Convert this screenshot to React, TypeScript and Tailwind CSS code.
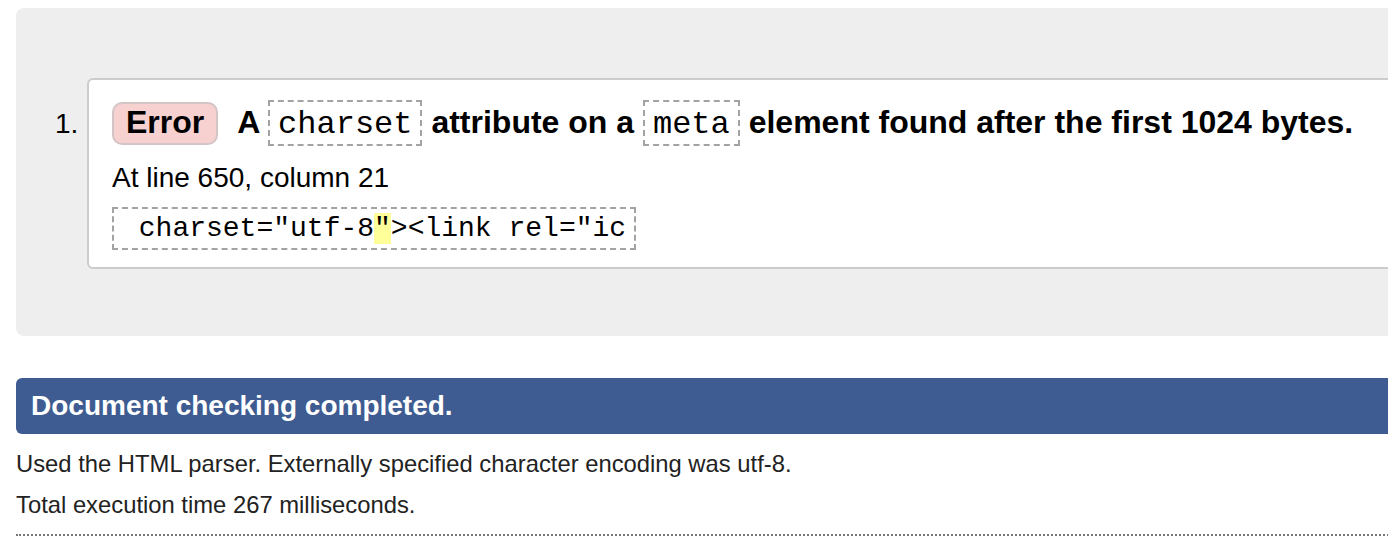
const sans = "font-['Liberation_Sans',Arial,Helvetica,sans-serif]";
const mono = "font-['Liberation_Mono','Courier_New',monospace]";

function Code({ children }: { children: React.ReactNode }) {
  return (
    <code
      className={`${mono} inline-block border-2 border-dashed border-[#a3a3a3] px-[8px] pt-[6px] pb-[2px] text-[32px] leading-[34px] font-normal text-black`}
    >
      {children}
    </code>
  );
}

export default function App() {
  return (
    <div className={`${sans} h-[554px] w-full overflow-hidden bg-white text-black`}>
      <div className="ml-4 w-[1420px] pt-2">
        {/* Messages */}
        <div className="flex items-baseline rounded-l-[8px] bg-[#eeeeee] pt-[70px] pb-[67px]">
          <div className="w-[71px] shrink-0 pl-[39px] text-[28px] leading-[32px]">1.</div>
          <div className="flex-1 rounded-l-[6px] border-2 border-[#cccccc] bg-white pt-[20px] pb-[17px] pl-[23px]">
            <p className="text-[32px] leading-[36px] font-bold">
              <span className="inline-block rounded-[10px] border-2 border-[#d3c5c5] bg-[#f7d0d0] px-[12px] pt-[3px] pb-[5px] text-[32px] leading-[31px]">
                Error
              </span>
              <span className="ml-[19px]">A </span>
              <Code>charset</Code> attribute on a <Code>meta</Code> element found after the first 1024 bytes.
            </p>
            <p className="mt-[16px] text-[28px] leading-[32px]">At line 650, column 21</p>
            <div
              className={`${mono} mt-[13px] w-fit border-2 border-dashed border-[#a3a3a3] px-[8px] py-[4px] text-[28px] leading-[31px] whitespace-pre`}
            >
              {' charset="utf-8'}
              <span className="bg-[#ffff99]">"</span>
              {'><link rel="ic'}
            </div>
          </div>
        </div>

        {/* Summary */}
        <h2 className="mt-[42px] flex h-[56px] items-center rounded-l-[6px] bg-[#3e5c91] px-[15px] text-[28px] font-bold text-white">
          Document checking completed.
        </h2>
        <div className="mt-[9px] text-[23.8px] leading-[41px] text-[#222222]">
          <p>Used the HTML parser. Externally specified character encoding was utf-8.</p>
          <p>Total execution time 267 milliseconds.</p>
        </div>
        <div className="mt-[9px] border-b-2 border-dotted border-[#777777]" />
      </div>
    </div>
  );
}
